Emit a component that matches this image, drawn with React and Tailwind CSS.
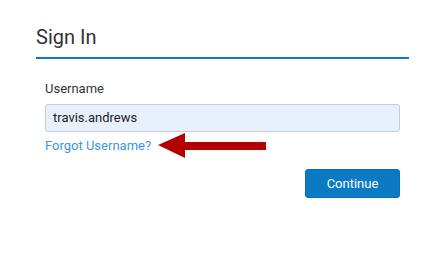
import React from "react";

export default function App() {
  return (
    <div className="w-[443px] h-[260px] bg-white font-['Roboto',sans-serif]">
      <div className="ml-[36px] w-[373px] pt-[25px]">
        <h2 className="text-[20px] leading-[24px] text-[#333] pb-[8px] border-b-[2px] border-[#0a7ac8]">Sign In</h2>
        <div className="px-[9px] pt-[22px]">
          <label className="block text-[13px] leading-[16px] text-[#333]">Username</label>
          <div className="mt-[7px] h-[28px] rounded-[3px] border border-[#c8ccd2] bg-[#e8f0fe] flex items-center px-[7px] text-[13px] text-[#222]">
            travis.andrews
          </div>
          <div className="mt-[1px] flex items-center h-[26px]">
            <a className="text-[13px] leading-[16px] text-[#3b97dc]">Forgot Username?</a>
            <svg width="110" height="26" viewBox="0 0 110 26" className="ml-[7px]">
              <polygon points="0,12 27,0 27,9 108,9 108,17 27,17 27,25" fill="#b30000" />
            </svg>
          </div>
          <div className="flex justify-end mt-[10px]">
            <button className="w-[95px] h-[29px] rounded-[3px] bg-[#0a7ac4] text-white text-[13px] border border-[#0a6fb5]">Continue</button>
          </div>
        </div>
      </div>
    </div>
  );
}
